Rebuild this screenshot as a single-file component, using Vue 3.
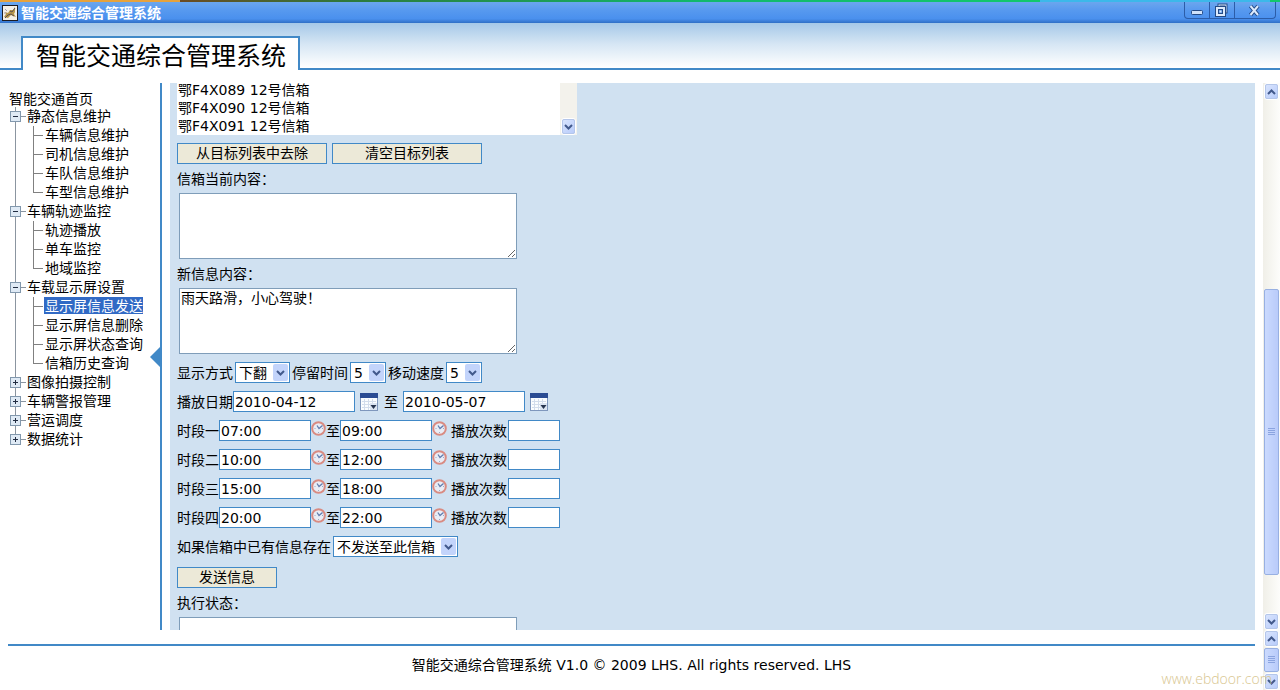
<script setup>
import { ref } from 'vue'

const tree = [
  { name: '静态信息维护', open: true, children: ['车辆信息维护', '司机信息维护', '车队信息维护', '车型信息维护'] },
  { name: '车辆轨迹监控', open: true, children: ['轨迹播放', '单车监控', '地域监控'] },
  { name: '车载显示屏设置', open: true, children: ['显示屏信息发送', '显示屏信息删除', '显示屏状态查询', '信箱历史查询'] },
  { name: '图像拍摄控制', open: false, children: [] },
  { name: '车辆警报管理', open: false, children: [] },
  { name: '营运调度', open: false, children: [] },
  { name: '数据统计', open: false, children: [] },
]
const selected = ref('显示屏信息发送')
const targets = ['鄂F4X089 12号信箱', '鄂F4X090 12号信箱', '鄂F4X091 12号信箱']
const current = ref('')
const message = ref('雨天路滑，小心驾驶！')
const startDate = ref('2010-04-12')
const endDate = ref('2010-05-07')
const periods = ref([
  { label: '时段一', from: '07:00', to: '09:00', times: '' },
  { label: '时段二', from: '10:00', to: '12:00', times: '' },
  { label: '时段三', from: '15:00', to: '18:00', times: '' },
  { label: '时段四', from: '20:00', to: '22:00', times: '' },
])
</script>

<template>
  <div class="window">
    <div class="strip"><i class="strip-a"></i><i class="strip-b"></i><i class="strip-c"></i><i class="strip-d"></i></div>
    <div class="titlebar">
      <svg class="app-icon" width="16" height="16" viewBox="0 0 16 16" aria-hidden="true">
        <rect x="0.5" y="0.5" width="15" height="15" fill="#f4efe6" stroke="#1b1b22" />
        <path d="M2 12 L4 9 L3 7 L6 8 L8 5 L11 5 L13 2 L13 7 L12 9 L14 12 L11 11 L9 10 L6 13 Z" fill="#b8964a" />
        <path d="M3 13 L6 10 L9 9 L12 11 M8 6 L10 7 L13 3" fill="none" stroke="#5b5150" />
        <path d="M3 4 L5 6 M2 8 H4" stroke="#a29cab" />
      </svg>
      <span class="title">智能交通综合管理系统</span>
      <div class="controls">
        <button type="button" class="ctl" aria-label="最小化">
          <svg width="24" height="16" viewBox="0 0 24 16"><rect x="6.5" y="8.5" width="11" height="4" rx="1" fill="#cfe1fa" stroke="#244a86" /></svg>
        </button>
        <button type="button" class="ctl" aria-label="还原">
          <svg width="24" height="16" viewBox="0 0 24 16">
            <g fill="none"><rect x="9" y="3" width="7" height="7" stroke="#244a86" stroke-width="3" /><rect x="9" y="3" width="7" height="7" stroke="#dceafc" />
            <rect x="7" y="6" width="7" height="7" fill="#4b8ce6" stroke="#244a86" stroke-width="4" /><rect x="7" y="6" width="7" height="7" stroke="#dceafc" stroke-width="2" /><rect x="9.5" y="8.5" width="2" height="2" fill="#dceafc" /></g>
          </svg>
        </button>
        <button type="button" class="ctl wide" aria-label="关闭">
          <svg width="40" height="16" viewBox="0 0 40 16"><path d="M15.500 4 L23 13 M23 4 L15.500 13" stroke="#244a86" stroke-width="4" /><path d="M15.500 4 L23 13 M23 4 L15.500 13" stroke="#dceafc" stroke-width="2" /></svg>
        </button>
      </div>
    </div>

    <header class="header">
      <div class="edge"></div>
      <h1 class="brand">智能交通综合管理系统</h1>
      <div class="edge grow"></div>
    </header>

    <main class="main">
      <nav class="sidebar" aria-label="导航">
        <a class="home" href="#">智能交通首页</a>
        <ul class="tree">
          <li v-for="node in tree" :key="node.name" class="branch">
            <div class="node">
              <button type="button" class="toggle" :aria-label="node.name" :aria-expanded="node.open">
                <svg width="11" height="11" viewBox="0 0 11 11">
                  <rect x="0.5" y="0.5" width="10" height="10" fill="#dfeaf5" stroke="#8298ad" />
                  <path d="M3 5.500 H8" stroke="#222d42" />
                  <path v-if="!node.open" d="M5.500 3 V8" stroke="#222d42" />
                </svg>
              </button>
              <a href="#">{{ node.name }}</a>
            </div>
            <ul v-if="node.open" class="leaves">
              <li v-for="leaf in node.children" :key="leaf" class="leaf">
                <a href="#" :class="{ selected: leaf === selected }" @click.prevent="selected = leaf">{{ leaf }}</a>
              </li>
            </ul>
          </li>
        </ul>
        <button type="button" class="collapse" aria-label="收起">
          <svg width="10" height="20" viewBox="0 0 10 20"><path d="M10 0 V20 L0 10 Z" fill="#4189c7" /></svg>
        </button>
      </nav>

      <section class="panel">
        <form class="form" @submit.prevent>
          <div class="listbox">
            <select class="targets" size="3" multiple aria-label="目标列表">
              <option v-for="t in targets" :key="t">{{ t }}</option>
            </select>
            <div class="list-track" aria-hidden="true">
              <span class="sb-btn"><svg width="9" height="6" viewBox="0 0 9 6"><path d="M1 1 L4.500 4.500 L8 1" /></svg></span>
            </div>
          </div>
          <div class="row gap-m">
            <button type="button" class="btn wide-btn">从目标列表中去除</button>
            <button type="button" class="btn wide-btn">清空目标列表</button>
          </div>
          <div class="field">
            <label for="current">信箱当前内容：</label>
            <textarea id="current" v-model="current"></textarea>
          </div>
          <div class="field">
            <label for="message">新信息内容：</label>
            <textarea id="message" v-model="message"></textarea>
          </div>
          <div class="row gap-s">
            <label for="mode">显示方式</label>
            <span class="pick"><select id="mode" class="w-mode"><option>下翻</option></select><i class="drop"><svg width="9" height="6" viewBox="0 0 9 6"><path d="M1 1 L4.500 4.500 L8 1" /></svg></i></span>
            <label for="stay">停留时间</label>
            <span class="pick"><select id="stay" class="w-num"><option>5</option></select><i class="drop"><svg width="9" height="6" viewBox="0 0 9 6"><path d="M1 1 L4.500 4.500 L8 1" /></svg></i></span>
            <label for="speed">移动速度</label>
            <span class="pick"><select id="speed" class="w-num"><option>5</option></select><i class="drop"><svg width="9" height="6" viewBox="0 0 9 6"><path d="M1 1 L4.500 4.500 L8 1" /></svg></i></span>
          </div>
          <div class="row gap-m">
            <span class="row"><label for="start">播放日期</label><input id="start" v-model="startDate" class="w-date" type="text" /></span>
            <button type="button" class="icon-btn" aria-label="选择开始日期">
              <svg width="18" height="18" viewBox="0 0 18 18"><rect x="0.5" y="0.5" width="17" height="17" fill="#fbfdff" stroke="#7f97bd" /><rect width="18" height="5" fill="#2b4c93" /><path d="M2 8.500 H16 M2 11.500 H16 M2 14.500 H16 M4.500 6 V17 M8.500 6 V17 M12.500 6 V17" stroke="#d3ddec" /><rect x="10" y="10" width="7" height="7" fill="#dbe4f1" /><path d="M10.500 12 H16.500 L13.500 16 Z" fill="#26344f" /></svg>
            </button>
            <label class="to" for="end">至</label>
            <input id="end" v-model="endDate" class="w-date" type="text" />
            <button type="button" class="icon-btn" aria-label="选择结束日期">
              <svg width="18" height="18" viewBox="0 0 18 18"><rect x="0.5" y="0.5" width="17" height="17" fill="#fbfdff" stroke="#7f97bd" /><rect width="18" height="5" fill="#2b4c93" /><path d="M2 8.500 H16 M2 11.500 H16 M2 14.500 H16 M4.500 6 V17 M8.500 6 V17 M12.500 6 V17" stroke="#d3ddec" /><rect x="10" y="10" width="7" height="7" fill="#dbe4f1" /><path d="M10.500 12 H16.500 L13.500 16 Z" fill="#26344f" /></svg>
            </button>
          </div>
          <div v-for="(p, i) in periods" :key="p.label" class="row">
            <label :for="'from' + i">{{ p.label }}</label>
            <input :id="'from' + i" v-model="p.from" class="w-time" type="text" />
            <button type="button" class="clock" aria-label="选择开始时间">
              <svg width="15" height="15" viewBox="0 0 15 15"><circle cx="7.500" cy="7.500" r="6.300" fill="#e9edf6" stroke="#d98b82" stroke-width="2" /><path d="M6 4.500 L8 7.500 L11.500 4.500" fill="none" stroke="#5f7bad" stroke-width="1.300" /><path d="M3.500 7.500 H4.500 M7.500 11 V12 M11 7.500 H12" stroke="#9aa9c4" /></svg>
            </button>
            <label :for="'to' + i">至</label>
            <input :id="'to' + i" v-model="p.to" class="w-time" type="text" />
            <button type="button" class="clock" aria-label="选择结束时间">
              <svg width="15" height="15" viewBox="0 0 15 15"><circle cx="7.500" cy="7.500" r="6.300" fill="#e9edf6" stroke="#d98b82" stroke-width="2" /><path d="M6 4.500 L8 7.500 L11.500 4.500" fill="none" stroke="#5f7bad" stroke-width="1.300" /><path d="M3.500 7.500 H4.500 M7.500 11 V12 M11 7.500 H12" stroke="#9aa9c4" /></svg>
            </button>
            <label class="times" :for="'times' + i">播放次数</label>
            <input :id="'times' + i" v-model="p.times" class="w-times" type="text" />
          </div>
          <div class="row gap-s">
            <label for="exist">如果信箱中已有信息存在</label>
            <span class="pick"><select id="exist" class="w-exist"><option>不发送至此信箱</option></select><i class="drop"><svg width="9" height="6" viewBox="0 0 9 6"><path d="M1 1 L4.500 4.500 L8 1" /></svg></i></span>
          </div>
          <div class="row send">
            <button type="submit" class="btn send-btn">发送信息</button>
          </div>
          <div class="field">
            <label for="status">执行状态：</label>
            <textarea id="status" readonly></textarea>
          </div>
        </form>
      </section>

      <div class="scrollbar" aria-hidden="true">
        <span class="sb-btn"><svg width="9" height="6" viewBox="0 0 9 6"><path d="M1 5 L4.500 1.500 L8 5" /></svg></span>
        <span class="space-before"></span>
        <span class="thumb thumb-page"><svg width="7" height="8" viewBox="0 0 7 8"><path class="grip" d="M0 0.500 H7 M0 2.500 H7 M0 4.500 H7 M0 6.500 H7" /></svg></span>
        <span class="space-after"></span>
        <span class="sb-btn"><svg width="9" height="6" viewBox="0 0 9 6"><path d="M1 1 L4.500 4.500 L8 1" /></svg></span>
      </div>
    </main>

    <div class="bottom">
      <footer class="footer">智能交通综合管理系统 V1.0 © 2009 LHS. All rights reserved. LHS</footer>
      <div class="scrollbar" aria-hidden="true">
        <span class="sb-btn"><svg width="9" height="6" viewBox="0 0 9 6"><path d="M1 5 L4.500 1.500 L8 5" /></svg></span>
        <span class="thumb thumb-fill"><svg width="7" height="8" viewBox="0 0 7 8"><path class="grip" d="M0 0.500 H7 M0 2.500 H7 M0 4.500 H7 M0 6.500 H7" /></svg></span>
        <span class="sb-btn"><svg width="9" height="6" viewBox="0 0 9 6"><path d="M1 1 L4.500 4.500 L8 1" /></svg></span>
      </div>
      <span class="mark">www.ebdoor.com</span>
    </div>
  </div>
</template>

<style>
body { margin: 0; background: #fff; }
</style>

<style scoped>
.window, .window * { box-sizing: border-box; }
.window {
  height: 100vh;
  display: flex;
  flex-direction: column;
  overflow: hidden;
  font-family: "DejaVu Sans", "Noto Sans CJK SC", sans-serif;
  font-size: 14px;
  line-height: 18px;
  color: #000;
}
button, input, select, textarea { font: inherit; color: inherit; margin: 0; }
button { padding: 0; border: 0; background: none; }
svg { display: block; }
a { color: inherit; text-decoration: none; }
ul { list-style: none; margin: 0; padding: 0; }

.strip { display: flex; height: 2px; flex: none; }
.strip-a { flex: 180; background: #e6a23c; }
.strip-b { flex: 860; background: linear-gradient(90deg, #6b4a22, #2d7a3c 20%, #12b86c 60%, #12c86c); }
.strip-c { flex: 230; background: #3cb8ea; }
.strip-d { flex: 10; background: #12c86c; }
.titlebar {
  flex: none;
  height: 21px;
  display: flex;
  align-items: center;
  padding: 0 4px 0 2px;
  gap: 3px;
  background: linear-gradient(#6ba6ee, #5799ef 40%, #4a90ee 80%, #2f6fc6);
}
.title { color: #fff; font-weight: bold; }
.controls {
  margin-left: auto;
  align-self: flex-start;
  display: flex;
  border: 1px solid #2c5da8;
  border-top: 0;
  border-radius: 0 0 4px 4px;
}
.ctl { height: 16px; border-right: 1px solid #2c5da8; }
.ctl.wide { border-right: 0; }

.header { flex: none; height: 47px; display: flex; background: linear-gradient(#a5c8e8, #d6e6f4 45%, #fff 95%); }
.edge { width: 21px; border-bottom: 2px solid #4189c7; }
.edge.grow { flex: 1; }
.brand {
  margin: 13px 0 0;
  padding: 0 12px 0 13px;
  border: 2px solid #4189c7;
  border-bottom: 0;
  background: #fff;
  font-size: 25px;
  font-weight: 400;
  line-height: 38px;
  height: 34px;
}

.main { flex: 1; min-height: 0; margin-top: 13px; display: flex; }
.sidebar { position: relative; flex: none; width: 162px; border-right: 2px solid #4189c7; padding: 7px 0 0 9px; }
.home { display: block; height: 17px; }
.branch { position: relative; }
.branch::before { content: ""; position: absolute; left: 6px; top: 0; bottom: 0; border-left: 1px solid #8b95a0; }
.branch:last-child::before { bottom: 10px; }
.node { position: relative; height: 19px; line-height: 19px; display: flex; align-items: center; gap: 6px; padding-left: 1px; }
.node::before { content: ""; position: absolute; left: 12px; top: 9px; width: 5px; border-top: 1px solid #8b95a0; }
.toggle { position: relative; }
.leaf { position: relative; height: 19px; line-height: 19px; padding-left: 35px; }
.leaf::before { content: ""; position: absolute; left: 24px; top: 0; bottom: 0; border-left: 1px solid #808080; }
.leaf:last-child::before { bottom: 9px; }
.leaf::after { content: ""; position: absolute; left: 24px; top: 9px; width: 10px; border-top: 1px solid #808080; }
.leaf a { display: inline-block; height: 17px; line-height: 19px; padding-left: 1px; }
.leaf a.selected { background: #316ac5; color: #fff; }
.collapse { position: absolute; right: 0; top: 50%; margin-top: -10px; }

.panel { flex: 1; min-width: 0; margin: 0 8px; background: #d0e1f1; overflow: hidden; }
.form { display: flex; flex-direction: column; gap: 8px; padding-left: 7px; }
.listbox { display: flex; align-items: flex-end; width: 400px; height: 52px; background: #fff; flex: none; overflow: hidden; }
.targets { flex: 1; height: 56px; border: 0; border-radius: 0; outline: 0; padding: 0; background: #fff; overflow: hidden; }
.targets option { padding: 0 1px; line-height: 18px; min-height: 18px; height: 18px; }
.list-track { align-self: stretch; width: 17px; display: flex; flex-direction: column; justify-content: flex-end; padding: 0 1px; background: #f3f2ec; }
.row { display: flex; align-items: center; }
.gap-s { gap: 2px; }
.gap-m { gap: 5px; }
.btn { height: 21px; border: 1px solid #4189c7; background: #ece9d8; line-height: 19px; }
.wide-btn { width: 150px; }
.send { padding-top: 2px; }
.send-btn { width: 100px; }
.field label { display: block; line-height: 14px; margin-bottom: 7px; }
textarea {
  display: block;
  width: 338px;
  height: 66px;
  margin-left: 2px;
  padding: 0 1px;
  border: 1px solid #7f9db9;
  border-radius: 0;
  background: #fff;
  outline: 0;
}
input { height: 21px; padding: 0 1px; border: 1px solid #4189c7; border-radius: 0; background: #fff; outline: 0; }
.pick { position: relative; display: block; }
.pick select {
  display: block;
  appearance: none;
  height: 21px;
  padding: 0 0 0 3px;
  border: 1px solid #4189c7;
  border-radius: 0;
  background: #fff;
}
.drop {
  position: absolute;
  right: 2px;
  top: 2px;
  width: 15px;
  height: 17px;
  display: flex;
  align-items: center;
  justify-content: center;
  background: #c3d4fb;
  border-radius: 2px;
  pointer-events: none;
}
.drop path, .sb-btn path { fill: none; stroke: #42598c; stroke-width: 2; }
.w-mode { width: 55px; }
.w-num { width: 36px; }
.w-exist { width: 125px; }
.w-date { width: 122px; }
.w-time { width: 92px; }
.w-times { width: 52px; }
.to { padding-left: 1px; }
.clock { width: 15px; height: 19px; display: flex; align-items: flex-start; }
.times { padding: 0 1px 0 4px; }

.scrollbar { flex: none; width: 17px; display: flex; flex-direction: column; gap: 1px; padding: 0 1px; background: linear-gradient(90deg, #f0efe8, #fdfdfb); }
.sb-btn {
  flex: none;
  height: 17px;
  display: flex;
  align-items: center;
  justify-content: center;
  border: 1px solid #fff;
  outline: 1px solid #b4c6ea;
  outline-offset: -2px;
  border-radius: 3px;
  background: linear-gradient(135deg, #dbe6fe, #b6cafa);
}
.thumb { display: flex; align-items: center; justify-content: center; border: 1px solid #98b0e2; border-radius: 2px; background: linear-gradient(90deg, #cbdafe, #b9cbfa); }
.thumb-page { flex: 287; }
.thumb-fill { flex: 1; }
.space-before { flex: 188; }
.space-after { flex: 36; }
.grip { stroke: #8ba4e0; }

.bottom { position: relative; flex: none; height: 60px; display: flex; }
.footer { flex: 1; margin: 14px 8px 0; border-top: 2px solid #4189c7; padding-top: 10px; text-align: center; }
.mark { position: absolute; right: 8px; bottom: 2px; font-family: "Open Sans", sans-serif; font-size: 14px; font-weight: 300; color: #d8c68f; }
</style>
